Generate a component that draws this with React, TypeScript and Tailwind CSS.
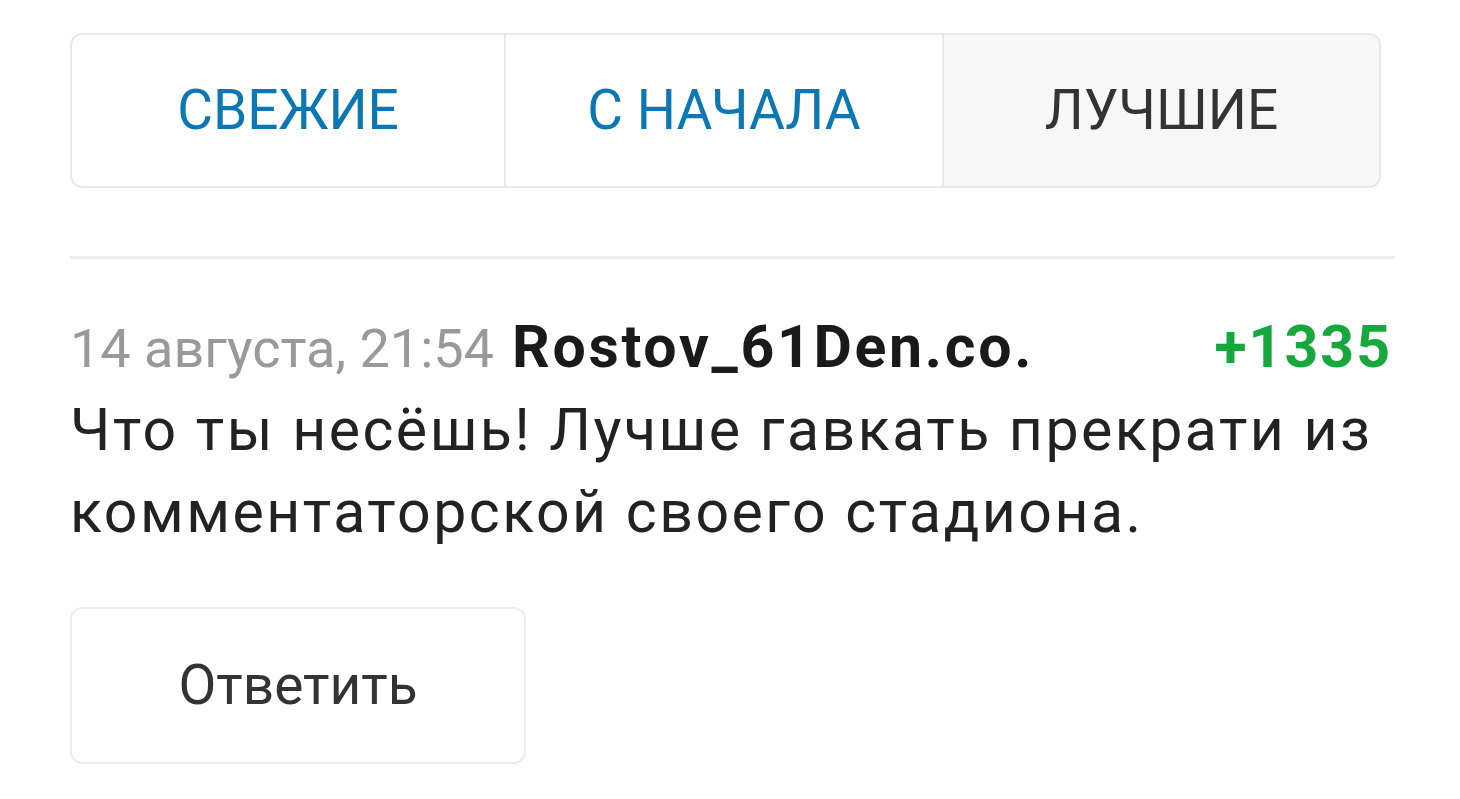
export default function App() {
  return (
    <div className="w-[1460px] h-[799px] bg-white overflow-hidden" style={{ fontFamily: "Roboto, 'Noto Sans', sans-serif" }}>
      <div className="pl-[70px] pt-[33px]">
        <div className="w-[1311px] h-[155px] grid grid-cols-[432px_438px_1fr] border-2 border-[#e8e8e8] rounded-[12px] overflow-hidden">
          <div className="flex items-center justify-center text-[#0b78b4] text-[55px] leading-none">СВЕЖИЕ</div>
          <div className="flex items-center justify-center text-[#0b78b4] text-[55px] leading-none border-l-2 border-[#e8e8e8]">С НАЧАЛА</div>
          <div className="flex items-center justify-center text-[#333333] text-[55px] leading-none border-l-2 border-[#e8e8e8] bg-[#f7f7f7]">ЛУЧШИЕ</div>
        </div>
        <div className="mt-[68px] w-[1325px] h-[3px] bg-[#ececec]" />
        <div className="w-[1322px] mt-[48px] flex items-baseline">
          <span className="text-[#999999] text-[54px] leading-[80px]">14 августа, 21:54</span>
          <span className="ml-[18px] text-[#1a1a1a] text-[59px] leading-[80px] font-bold tracking-[2.7px]">Rostov_61Den.co.</span>
          <span className="ml-auto text-[#16a83c] text-[59px] leading-[80px] font-bold tracking-[2px]">+1335</span>
        </div>
        <div className="w-[1340px] text-[#222222] text-[59px] leading-[82px] tracking-[2.5px]">
          Что ты несёшь! Лучше гавкать прекрати из комментаторской своего стадиона.
        </div>
        <div className="mt-[54px] w-[456px] h-[157px] border-2 border-[#ececec] rounded-[12px] flex items-center justify-center text-[#333333] text-[55px] leading-none">
          Ответить
        </div>
      </div>
    </div>
  );
}
